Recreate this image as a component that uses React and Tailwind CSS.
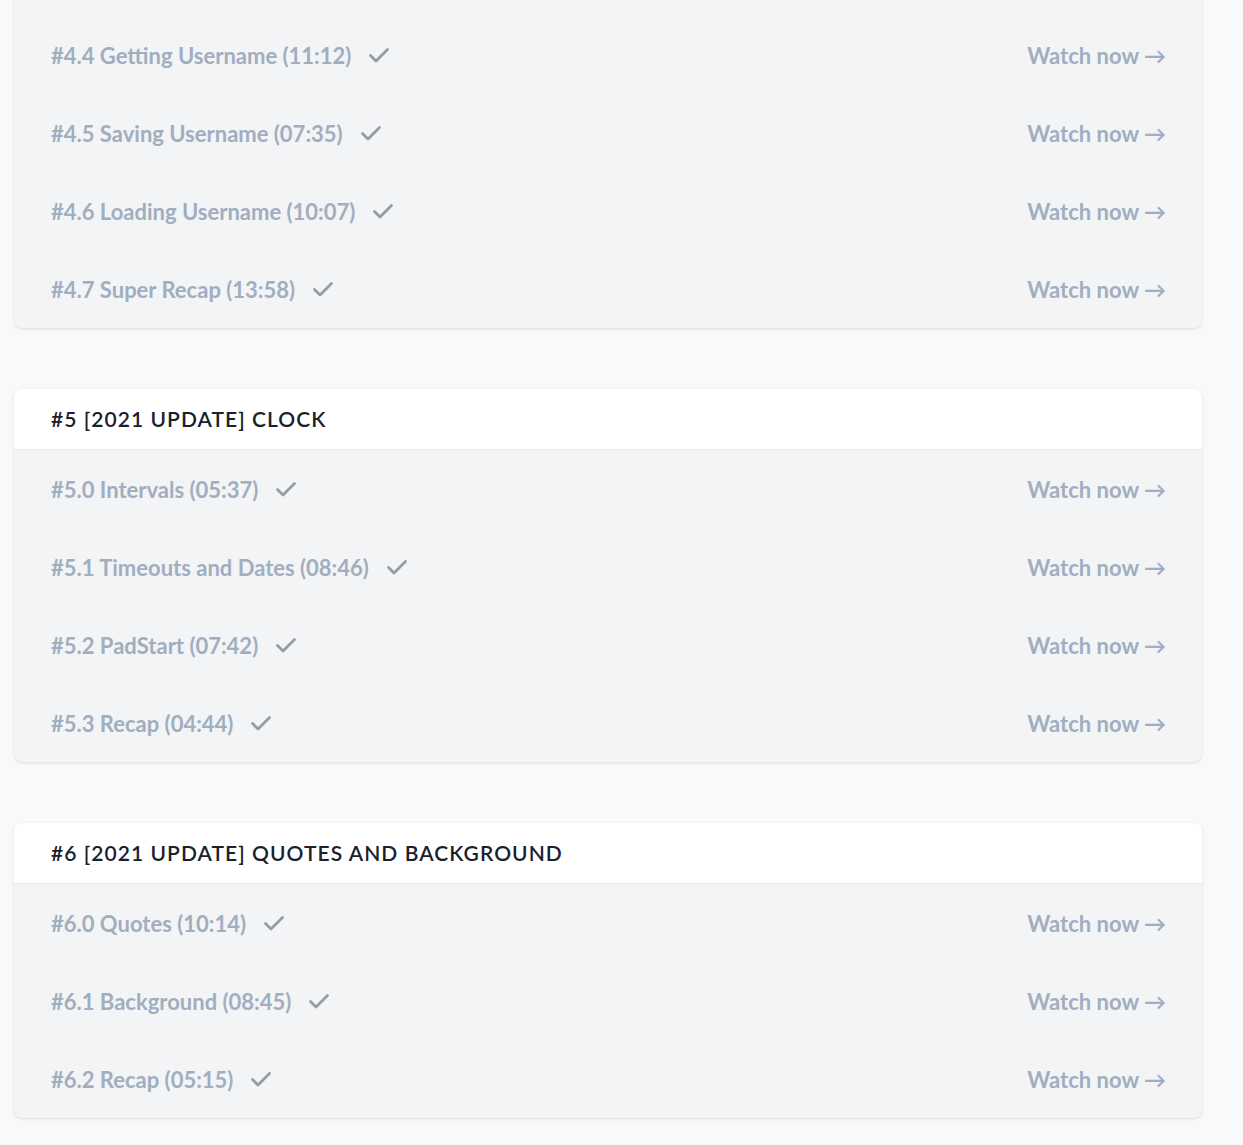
/* eslint-disable */

const sections = [
  {
    id: "4",
    title: null,
    lessons: [
      "#4.4 Getting Username (11:12)",
      "#4.5 Saving Username (07:35)",
      "#4.6 Loading Username (10:07)",
      "#4.7 Super Recap (13:58)",
    ],
  },
  {
    id: "5",
    title: "#5 [2021 UPDATE] CLOCK",
    lessons: [
      "#5.0 Intervals (05:37)",
      "#5.1 Timeouts and Dates (08:46)",
      "#5.2 PadStart (07:42)",
      "#5.3 Recap (04:44)",
    ],
  },
  {
    id: "6",
    title: "#6 [2021 UPDATE] QUOTES AND BACKGROUND",
    lessons: [
      "#6.0 Quotes (10:14)",
      "#6.1 Background (08:45)",
      "#6.2 Recap (05:15)",
    ],
  },
];

function CheckIcon() {
  return (
    <svg width="22" height="18" viewBox="0 0 22 18" fill="none" className="shrink-0">
      <path
        d="M2.5 9.5l5.5 5.5L19.5 3.5"
        stroke="#959ba7"
        strokeWidth="2.8"
        strokeLinecap="round"
        strokeLinejoin="round"
      />
    </svg>
  );
}

function LessonRow({ text }) {
  return (
    <li className="flex h-[78px] items-center justify-between pl-[37px] pr-9">
      <div className="flex items-center gap-[17px]">
        <span className="text-[22px] font-bold text-[#a0aec0]">{text}</span>
        <CheckIcon />
      </div>
      <span className="text-[22px] font-bold text-[#a0aec0]">Watch now →</span>
    </li>
  );
}

function Section({ section, first }) {
  return (
    <div
      className={`w-[1188px] bg-[#f3f4f6] shadow-[0_1px_3px_rgba(0,0,0,0.12)] ${
        first ? "rounded-b-lg pt-4" : "mt-[61px] rounded-lg"
      }`}
    >
      {section.title && (
        <div className="flex h-[61px] items-center rounded-t-lg border-b border-[#e5e7eb] bg-white pl-[37px]">
          <h3 className="text-[21px] font-semibold tracking-[0.05em] text-[#1a202c]">
            {section.title}
          </h3>
        </div>
      )}
      <ul>
        {section.lessons.map((l) => (
          <LessonRow key={l} text={l} />
        ))}
      </ul>
    </div>
  );
}

export default function App() {
  return (
    <div
      className="min-h-[1145px] bg-[#f8f9fb] pl-[14px]"
      style={{ fontFamily: "Lato, 'Noto Sans', sans-serif" }}
    >
      {sections.map((s, i) => (
        <Section key={s.id} section={s} first={i === 0} />
      ))}
    </div>
  );
}
